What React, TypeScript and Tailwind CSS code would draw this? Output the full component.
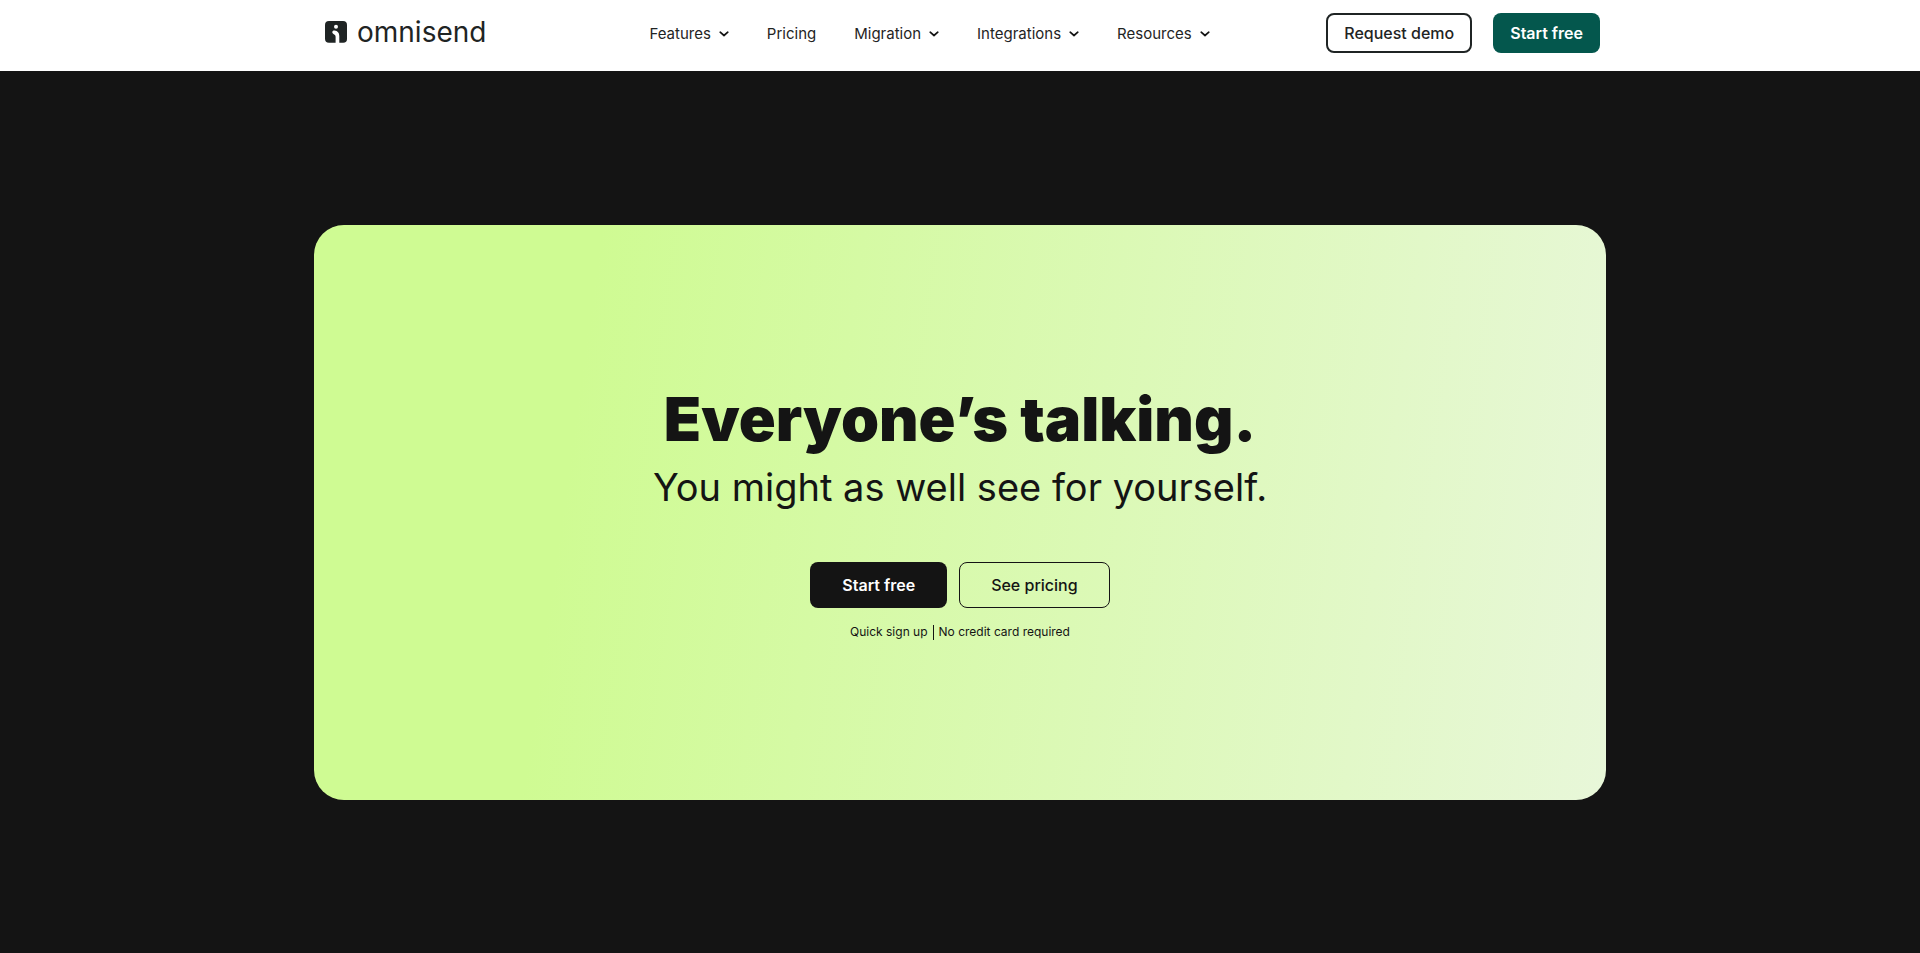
import React from "react";

const navItems = [
  { label: "Features", menu: true },
  { label: "Pricing", menu: false },
  { label: "Migration", menu: true },
  { label: "Integrations", menu: true },
  { label: "Resources", menu: true },
];

function Chevron() {
  return (
    <svg width="10" height="6" viewBox="0 0 10 6" fill="none" aria-hidden="true">
      <path d="M1.2 1.2 5 4.5 8.8 1.2" stroke="#141414" strokeWidth="1.7" strokeLinecap="round" strokeLinejoin="round" />
    </svg>
  );
}

function Logo() {
  return (
    <a href="#home" className="flex items-center gap-2.5 text-[#1f2424]">
      <svg width="22" height="22" viewBox="0 0 22 22" aria-hidden="true">
        <path
          fill="#1f2424"
          d="M4 0h14a4 4 0 0 1 4 4v14a3.800 3.800 0 0 1-3.800 3.800H14.300V15c0-3-1.700-5.200-4.700-5.400-1.400-.1-2.300.6-2.300 1.700 0 .9.600 1.400 1.500 1.900 1.200.6 1.800 1.300 1.800 2.700v5.900H4a4 4 0 0 1-4-4V4a4 4 0 0 1 4-4Z"
        />
        <circle cx="11" cy="5.700" r="2" fill="#fff" />
      </svg>
      <span className="text-[28px] leading-8">omnisend</span>
    </a>
  );
}

export default function App() {
  return (
    <div className="min-h-screen bg-[#141414] font-['Inter','Liberation_Sans',sans-serif] text-[#141414]">
      <header className="bg-white">
        <div className="mx-auto flex max-w-[1280px] items-start pt-[13px] pb-[17px] pl-[5px]">
          <div className="pt-[3px]">
            <Logo />
          </div>
          <nav className="mt-px ml-[163px] flex h-10 items-center gap-[38px]">
            {navItems.map((item) =>
              item.menu ? (
                <button key={item.label} type="button" className="flex items-center gap-2 text-[15px] leading-6 text-[#1f2424]">
                  {item.label}
                  <Chevron />
                </button>
              ) : (
                <a key={item.label} href="#pricing" className="text-[15px] leading-6 text-[#1f2424]">
                  {item.label}
                </a>
              ),
            )}
          </nav>
          <div className="ml-auto flex gap-[21px]">
            <a href="#demo" className="flex h-10 items-center rounded-lg border-2 border-[#1f2424] px-4 text-base font-medium text-[#1f2424]">
              Request demo
            </a>
            <a href="#start" className="flex h-10 items-center rounded-lg bg-[#04574d] px-[17px] text-base font-semibold text-white">
              Start free
            </a>
          </div>
        </div>
      </header>
      <main className="mx-auto max-w-[1292px] pt-[154px] pb-[153px]">
        <section className="flex flex-col items-center rounded-[30px] bg-[linear-gradient(98deg,#cffb93_21%,#e8f7d9_100%)] pt-[154px] pb-[160px] text-center">
          <h1 className="text-[61px] leading-[80px] font-black">Everyone’s talking.</h1>
          <p className="text-[38px] leading-[56px]">You might as well see for yourself.</p>
          <div className="mt-[47px] flex gap-3">
            <a href="#start" className="flex h-[46px] items-center rounded-lg bg-[#141414] px-8 text-base font-semibold text-white">
              Start free
            </a>
            <a href="#pricing" className="flex h-[46px] items-center rounded-lg border border-[#141414] px-[31px] text-base font-medium">
              See pricing
            </a>
          </div>
          <p className="mt-4 flex items-center gap-[5px] text-xs leading-4">
            Quick sign up <span className="h-[15px] w-px bg-[#141414]" /> No credit card required
          </p>
        </section>
      </main>
    </div>
  );
}
